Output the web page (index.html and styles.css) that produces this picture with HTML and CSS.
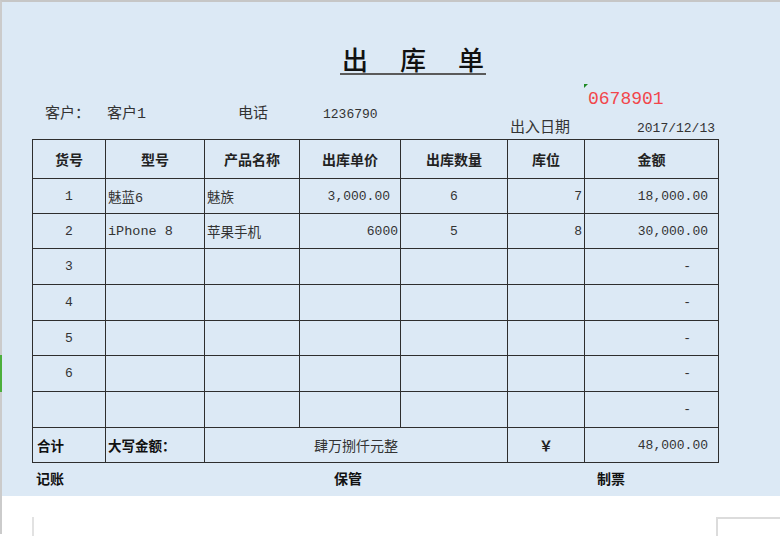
FILE: index.html
```html
<!DOCTYPE html>
<html lang="zh">
<head>
<meta charset="utf-8">
<title>出库单</title>
<link rel="stylesheet" href="styles.css">
</head>
<body>
<div class="frame">
  <div class="marker"></div>
  <div class="sheet">
    <div class="title-row">
      <h1 class="title"><span>出</span><span>库</span><span>单</span></h1>
    </div>
    <div class="info cols">
      <div class="serial">0678901</div>
      <div class="c-cust-l">客户：</div>
      <div class="c-cust-v">客户1</div>
      <div class="c-tel-l">电话</div>
      <div class="c-tel-v">1236790</div>
      <div class="c-date-l">出入日期</div>
      <div class="c-date-v">2017/12/13</div>
    </div>
    <table class="grid">
      <colgroup>
        <col class="w1"><col class="w2"><col class="w3"><col class="w4"><col class="w5"><col class="w6"><col class="w7">
      </colgroup>
      <thead>
        <tr class="head">
          <th>货号</th><th>型号</th><th>产品名称</th><th>出库单价</th><th>出库数量</th><th>库位</th><th>金额</th>
        </tr>
      </thead>
      <tbody>
        <tr class="r35">
          <td class="ctr">1</td><td class="lft">魅蓝6</td><td class="lft">魅族</td><td class="acc">3,000.00</td><td class="ctr">6</td><td class="num">7</td><td class="acc">18,000.00</td>
        </tr>
        <tr class="r35">
          <td class="ctr">2</td><td class="lft">iPhone 8</td><td class="lft">苹果手机</td><td class="num">6000</td><td class="ctr">5</td><td class="num">8</td><td class="acc">30,000.00</td>
        </tr>
        <tr class="r36">
          <td class="ctr">3</td><td></td><td></td><td></td><td></td><td></td><td class="dash">-</td>
        </tr>
        <tr class="r36">
          <td class="ctr">4</td><td></td><td></td><td></td><td></td><td></td><td class="dash">-</td>
        </tr>
        <tr class="r35">
          <td class="ctr">5</td><td></td><td></td><td></td><td></td><td></td><td class="dash">-</td>
        </tr>
        <tr class="r36">
          <td class="ctr">6</td><td></td><td></td><td></td><td></td><td></td><td class="dash">-</td>
        </tr>
        <tr class="r36">
          <td></td><td></td><td></td><td></td><td></td><td></td><td class="dash">-</td>
        </tr>
        <tr class="r35 total">
          <td class="lft b">合计</td><td class="lft b">大写金额：</td><td colspan="3" class="ctr">肆万捌仟元整</td><td class="ctr yen">￥</td><td class="acc">48,000.00</td>
        </tr>
      </tbody>
    </table>
    <div class="footer cols">
      <div class="f1">记账</div>
      <div class="f2">保管</div>
      <div class="f3">制票</div>
    </div>
  </div>
  <div class="below">
    <div class="box-left"></div>
    <div class="box-right"></div>
  </div>
</div>
</body>
</html>
```
FILE: styles.css
```css
html, body {
  margin: 0;
  padding: 0;
  background: #ffffff;
}
body {
  font-family: "Liberation Mono", "Noto Sans CJK SC", monospace;
  color: #222;
  width: 780px;
  height: 536px;
  overflow: hidden;
}
.frame {
  position: relative;
  border-top: 2px solid #c6c6c6;
  border-left: 2px solid #cbcbcb;
  height: 534px;
  box-sizing: border-box;
}
.marker {
  position: absolute;
  left: -2px;
  top: 353px;
  width: 2px;
  height: 37px;
  background: #4caf3c;
}
.sheet {
  background: #dce9f5;
  height: 494px;
  box-sizing: border-box;
  padding-left: 30px;
  padding-top: 43px;
}
.cols {
  display: grid;
  grid-template-columns: 73px 99px 95px 101px 107px 77px 134px;
}
.title-row {
  display: flex;
  padding-left: 308px;
}
.title {
  margin: 0;
  display: flex;
  gap: 32px;
  padding: 0 2px;
  font-family: "Noto Sans CJK SC", sans-serif;
  font-weight: 500;
  font-size: 26px;
  line-height: 28px;
  color: #111;
  border-bottom: 2px solid #5a5a5a;
}
.info {
  margin-top: 16px;
  grid-template-rows: 14px 14px 14px;
  line-height: 14px;
  font-size: 15px;
  color: #333;
}
.info > div {
  white-space: nowrap;
}
.serial {
  position: relative;
  grid-column: 7;
  grid-row: 1;
  padding-left: 4px;
  padding-top: 1px;
  font-size: 18px;
  color: #f2464b;
}
.serial::before {
  content: "";
  position: absolute;
  left: 0;
  top: -7px;
  border-top: 4px solid #1e8a24;
  border-right: 4px solid transparent;
}
.c-cust-l { grid-column: 1; grid-row: 2; padding-left: 13px; font-family: "Noto Sans CJK SC", sans-serif; }
.c-cust-v { grid-column: 2; grid-row: 2; padding-left: 2px; padding-top: 3px; }
.c-tel-l { grid-column: 3; grid-row: 2; padding-left: 34px; font-family: "Noto Sans CJK SC", sans-serif; }
.c-tel-v { grid-column: 4; grid-row: 2; padding-left: 24px; padding-top: 3px; font-size: 13px; }
.c-date-l { grid-column: 6; grid-row: 3; padding-left: 3px; font-family: "Noto Sans CJK SC", sans-serif; }
.c-date-v { grid-column: 7; grid-row: 3; text-align: right; padding-right: 3px; padding-top: 3px; font-size: 13px; }

.grid {
  margin-top: 6px;
  border-collapse: collapse;
  table-layout: fixed;
  width: 686px;
  font-size: 13px;
  color: #333;
}
.w1 { width: 73px; }
.w2 { width: 99px; }
.w3 { width: 95px; }
.w4 { width: 101px; }
.w5 { width: 107px; }
.w6 { width: 77px; }
.w7 { width: 134px; }
.grid th, .grid td {
  border: 1px solid #2e2e2e;
  padding: 0;
  white-space: nowrap;
  overflow: hidden;
}
.grid th {
  height: 38px;
  font-family: "Noto Sans CJK SC", sans-serif;
  font-weight: 700;
  font-size: 14px;
  color: #222;
  text-align: center;
}
.r35 td { height: 34px; }
.r36 td { height: 35px; }
.ctr { text-align: center; }
.lft { text-align: left; padding-left: 2px !important; }
.num { text-align: right; padding-right: 2px !important; }
.acc { text-align: right; padding-right: 10px !important; }
.dash { text-align: right; padding-right: 27px !important; }
.grid td.lft {
  font-size: 13.5px;
}
.total td {
  font-family: "Noto Sans CJK SC", sans-serif;
  font-size: 14px;
}
.total td.acc {
  font-family: "Liberation Mono", monospace;
  font-size: 13px;
}
.b {
  font-weight: 700;
  color: #111;
}
.total td.b:first-child {
  padding-left: 4px !important;
}
.yen {
  font-weight: 700;
  color: #222;
}
.footer {
  margin-top: 5px;
  line-height: 20px;
  font-family: "Noto Sans CJK SC", sans-serif;
  font-weight: 700;
  font-size: 14px;
  color: #111;
}
.f1 { grid-column: 1; padding-left: 4px; }
.f2 { grid-column: 4; padding-left: 35px; }
.f3 { grid-column: 7; padding-left: 13px; }

.below {
  display: flex;
  justify-content: space-between;
  padding-top: 21px;
  padding-left: 30px;
  height: 40px;
  box-sizing: border-box;
}
.box-left {
  width: 500px;
  border-left: 2px solid #e2e2e2;
}
.box-right {
  width: 62px;
  border-top: 2px solid #dcdcdc;
  border-left: 2px solid #dcdcdc;
}
```
